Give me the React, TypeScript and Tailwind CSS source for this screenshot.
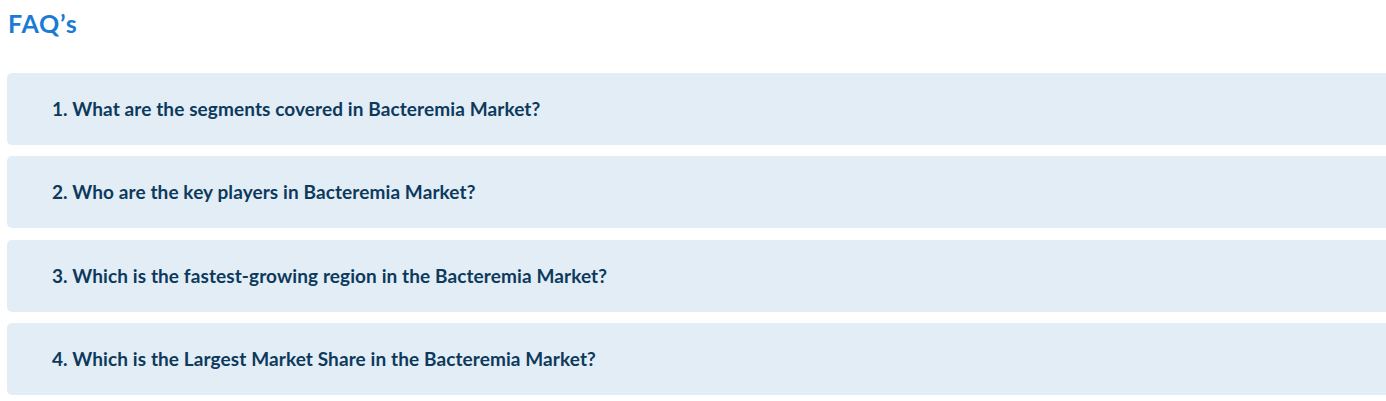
const faqs = [
  "1. What are the segments covered in Bacteremia Market?",
  "2. Who are the key players in Bacteremia Market?",
  "3. Which is the fastest-growing region in the Bacteremia Market?",
  "4. Which is the Largest Market Share in the Bacteremia Market?",
]

const App = () => {
  return (
    <div className="min-h-screen bg-white font-['Lato',sans-serif] overflow-hidden">
      <h2 className="pl-[8px] pt-[8px] text-[25px] leading-[30px] font-bold text-[#1b7bd4] tracking-[0.8px]">FAQ’s</h2>

      <div className="mt-[35px] pl-[7px] -mr-[10px] flex flex-col gap-[11.4px]">
        {faqs.map((q) => (
          <div key={q} className="h-[72px] rounded-[5px] bg-[#e3edf6] flex items-center pl-[45px]">
            <span className="text-[19px] font-bold text-[#0d3a5c] tracking-[0.1px]">{q}</span>
          </div>
        ))}
      </div>
    </div>
  )
}

export default App
